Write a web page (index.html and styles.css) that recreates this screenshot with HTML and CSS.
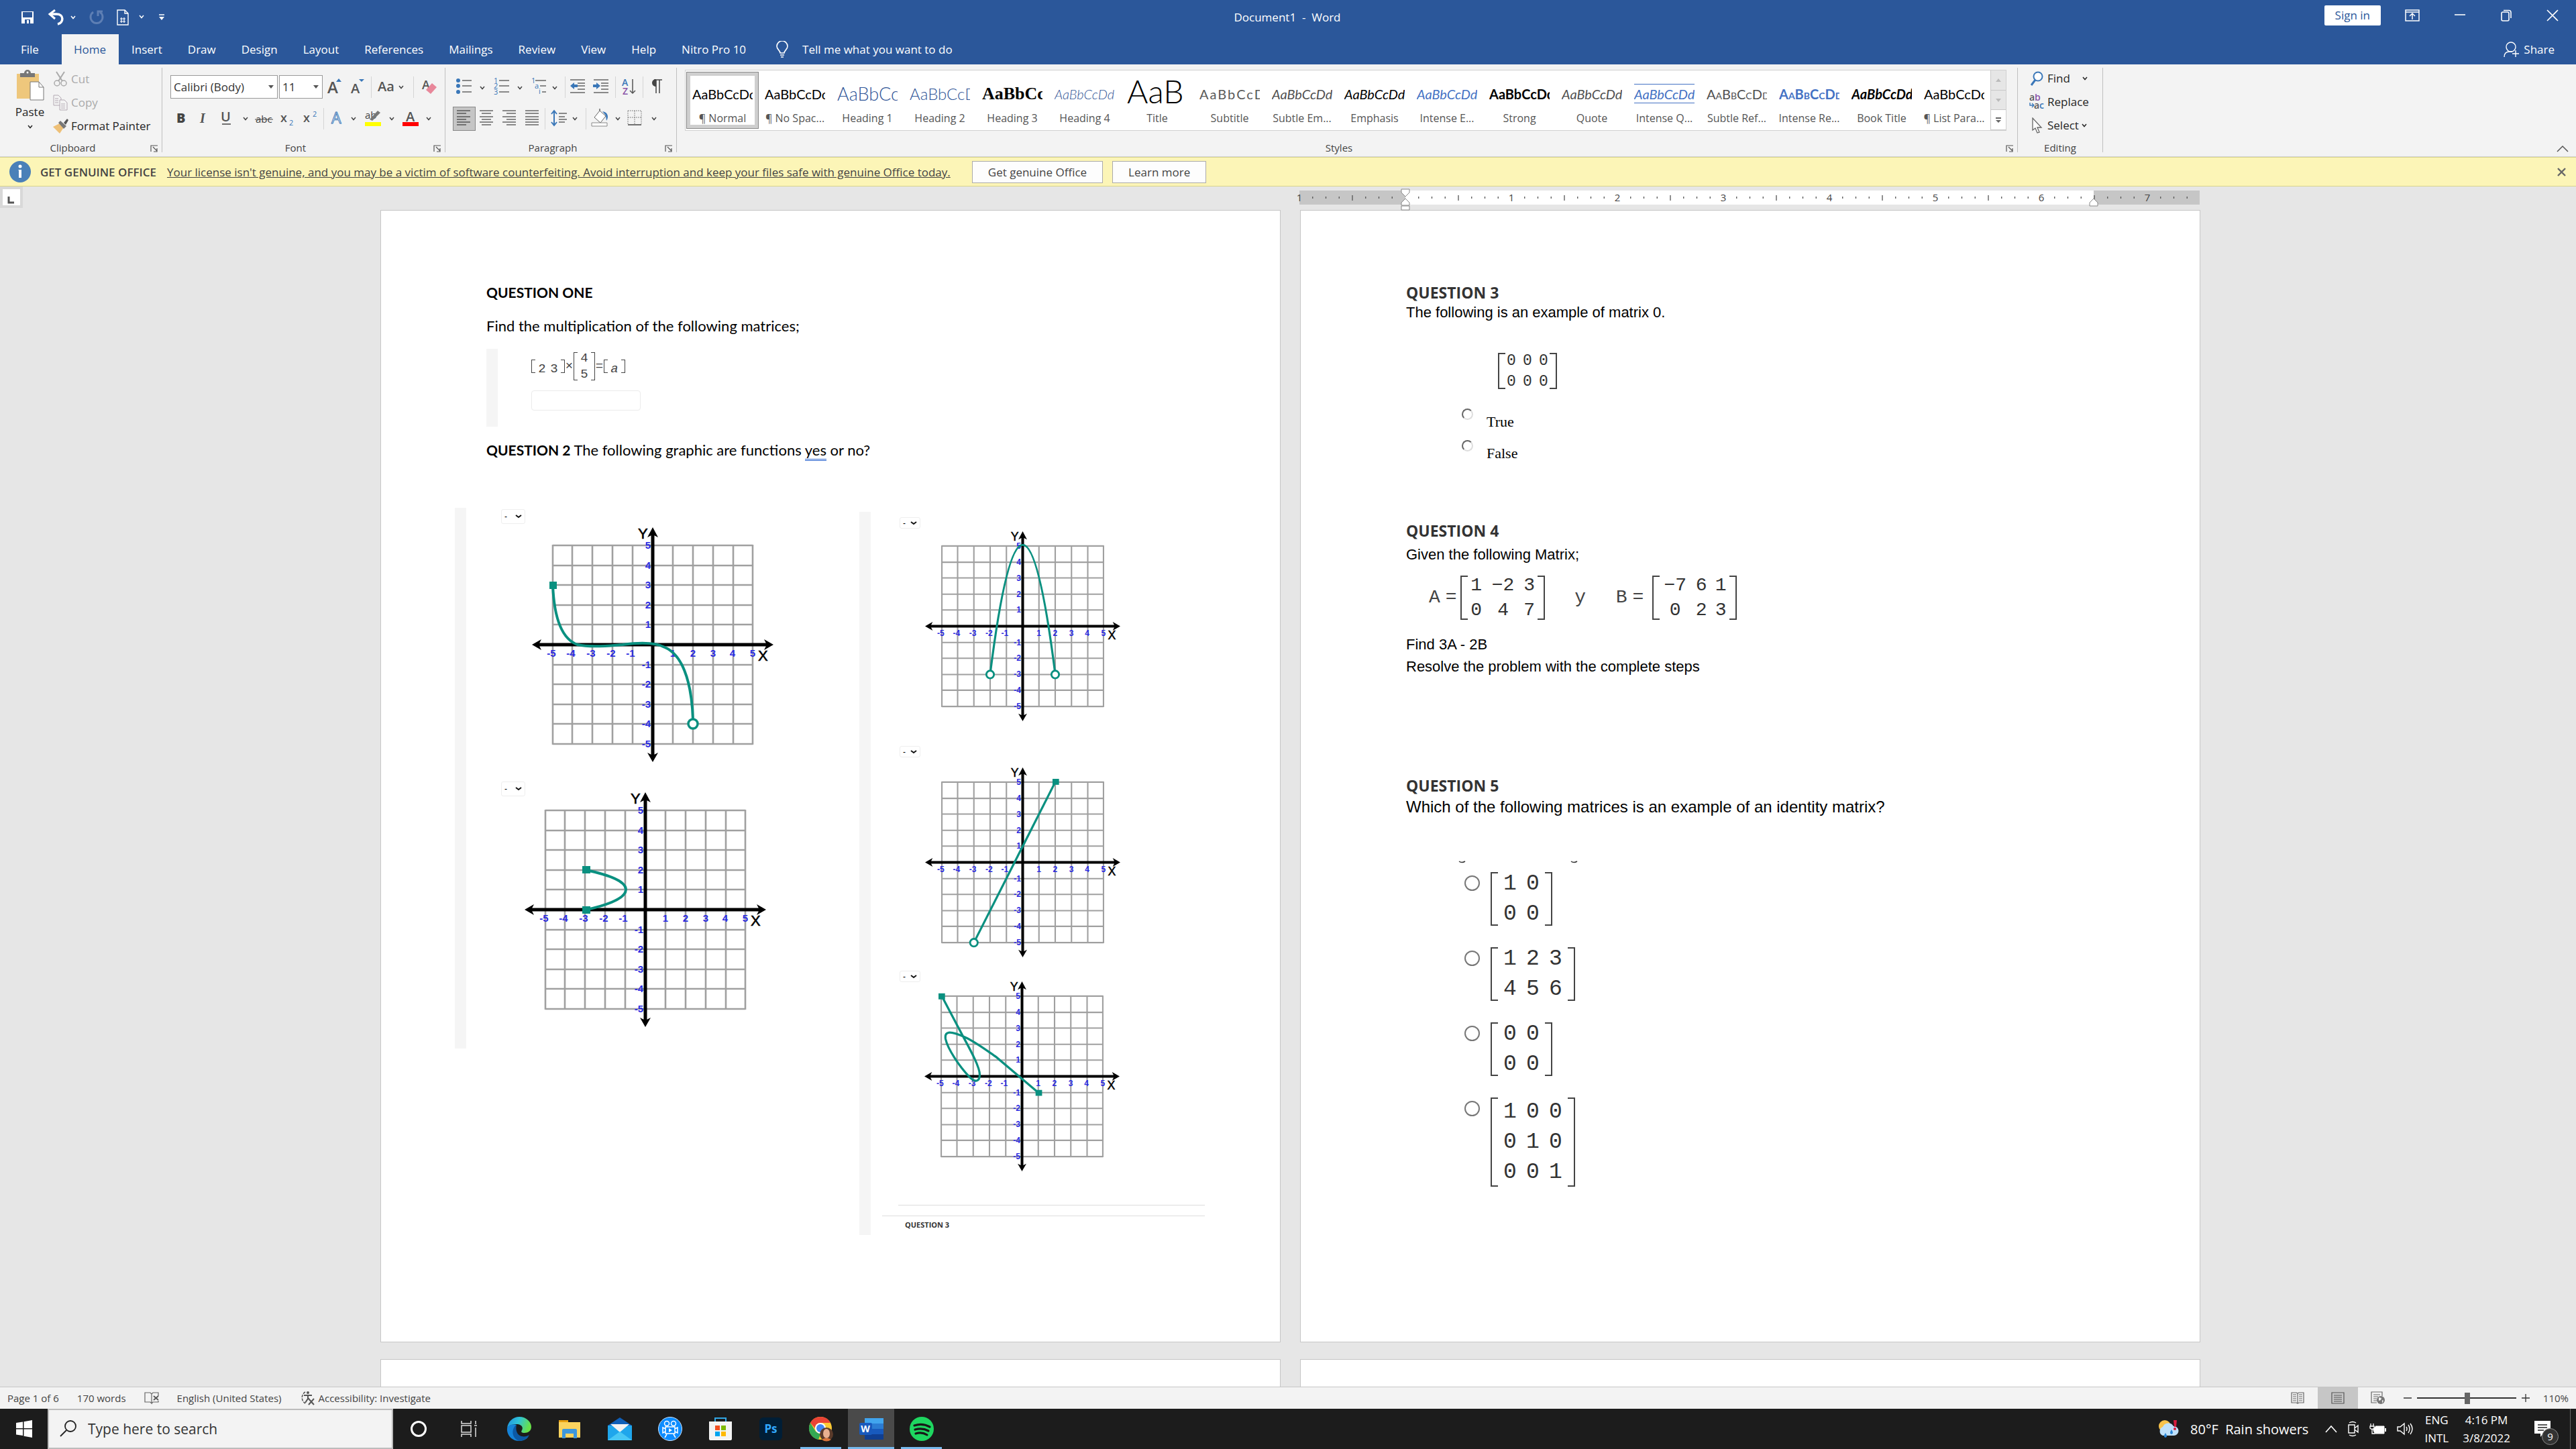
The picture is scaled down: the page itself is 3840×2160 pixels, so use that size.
FILE: index.html
```html
<!DOCTYPE html>
<html lang="en">

<head>
  <meta charset="UTF-8">
  <meta name="viewport" content="width=device-width, initial-scale=1.0">
  <title>Document1 - Word</title>
  <link rel="stylesheet" href="styles.css">
</head>

<body>
  <!-- shared shapes -->
  <svg class="defs" aria-hidden="true">
    <symbol id="chev" viewBox="0 0 8 6"><path d="M1 1l3 3.5L7 1" fill="none" stroke="currentColor" stroke-width="1.5" /></symbol>
    <symbol id="launch" viewBox="0 0 12 11"><path d="M1 10V1h10M4 3l6 6M10 5v5H5" fill="none" stroke="#555" stroke-width="1.2" /></symbol>
  </svg>

  <div class="app">
    <header class="titlebar">
      <div class="quick">
        <button aria-label="Save"><svg width="22" height="22" viewBox="0 0 22 22"><path d="M2 2h18v18H2z" fill="#fff" /><path d="M4 3h14v8H4z" fill="#2b579a" /><path d="M7 14h8v6H7z" fill="#2b579a" /><path d="M10 15h3v5h-3z" fill="#fff" /></svg></button>
        <button aria-label="Undo"><svg width="44" height="24" viewBox="0 0 44 24"><path d="M5 7h9c12 0 11 13 2 15" fill="none" stroke="#fff" stroke-width="3.500" /><path d="M12 1L4 7l8 7" fill="none" stroke="#fff" stroke-width="3" /><use href="#chev" x="35" y="9" width="8" height="6" /></svg></button>
        <button aria-label="Redo"><svg width="24" height="24" viewBox="0 0 24 24"><path d="M7 4a9 9 0 1 0 10 0" fill="none" stroke="#5e7fb4" stroke-width="3" /><path d="M14 10V3h7" fill="none" stroke="#5e7fb4" stroke-width="3" /></svg></button>
        <button aria-label="Page number"><svg width="44" height="24" viewBox="0 0 44 24"><path d="M1 1h11l5 5v17H1zM12 1v5h5" fill="none" stroke="#fff" stroke-width="1.4" /><path d="M7 12v8M11 12v8M5 14h8M5 18h8" stroke="#fff" stroke-width="1.2" /><use href="#chev" x="33" y="8" width="8" height="6" /></svg></button>
        <button aria-label="Customize"><svg width="10" height="10" viewBox="0 0 10 10"><path d="M1 1h8" stroke="#fff" stroke-width="1.5" /><path d="M1 4h8L5 9z" fill="#fff" /></svg></button>
      </div>
      <div class="title">Document1&nbsp; -&nbsp; Word</div>
      <div class="window-tools">
        <button class="signin">Sign in</button>
        <button aria-label="Ribbon display"><svg width="22" height="18" viewBox="0 0 22 18"><path d="M1 1h20v16H1zM1 4h20M11 15V7M7 10l4-4 4 4" fill="none" stroke="#fff" stroke-width="1.5" /></svg></button>
        <button aria-label="Minimize"><svg width="18" height="18" viewBox="0 0 18 18"><path d="M1 8h16" stroke="#fff" stroke-width="1.6" /></svg></button>
        <button aria-label="Restore"><svg width="18" height="18" viewBox="0 0 18 18"><rect x="2" y="4" width="11" height="13" rx="2" fill="none" stroke="#fff" stroke-width="1.6" /><path d="M5 1.500h8q3 0 3 3V13" fill="none" stroke="#fff" stroke-width="1.6" /></svg></button>
        <button aria-label="Close"><svg width="18" height="18" viewBox="0 0 18 18"><path d="M1 1l16 16M17 1L1 17" stroke="#fff" stroke-width="1.6" /></svg></button>
      </div>
    </header>

    <nav class="tabs">
      <button class="tab file">File</button>
      <button class="tab active">Home</button>
      <button class="tab">Insert</button>
      <button class="tab">Draw</button>
      <button class="tab">Design</button>
      <button class="tab">Layout</button>
      <button class="tab">References</button>
      <button class="tab">Mailings</button>
      <button class="tab">Review</button>
      <button class="tab">View</button>
      <button class="tab">Help</button>
      <button class="tab">Nitro Pro 10</button>
      <button class="tab tell"><svg width="20" height="26" viewBox="0 0 20 26"><path d="M7 18c0-4-5-5-5-10a8 8 0 0 1 16 0c0 5-5 6-5 10zM7 21h6M8 24h4" fill="none" stroke="#fff" stroke-width="1.6" /></svg>Tell me what you want to do</button>
      <button class="tab share"><svg width="24" height="24" viewBox="0 0 24 24"><circle cx="11" cy="8" r="7" fill="none" stroke="#fff" stroke-width="1.4" /><path d="M1 23c0-5 3-8 8-8h4M18 13v10M13 18h10" fill="none" stroke="#fff" stroke-width="1.4" /></svg>Share</button>
    </nav>

    <div class="ribbon">
      <section class="group clipboard">
        <div class="group-body">
          <button class="paste">
            <svg width="42" height="46" viewBox="0 0 42 46"><path d="M1 6h33v37H1z" fill="#eec77c" /><path d="M6 5h6a5 5 0 0 1 10 0h6v6H6z" fill="#777" /><circle cx="17" cy="4" r="1.500" fill="#fff" /><path d="M21 18h13l7 8v19H21z" fill="#fff" stroke="#777" /><path d="M34 18v8h7" fill="none" stroke="#777" /></svg>
            <span>Paste</span>
            <svg width="8" height="6"><use href="#chev" width="8" height="6" /></svg>
          </button>
          <div class="stack">
            <button class="off"><svg width="24" height="24" viewBox="0 0 24 24"><path d="M6 1l9 14M18 1L9 15" stroke="#aaa" stroke-width="2" /><circle cx="7" cy="18" r="4" fill="none" stroke="#aaa" stroke-width="1.5" /><circle cx="17" cy="18" r="4" fill="none" stroke="#aaa" stroke-width="1.5" /></svg>Cut</button>
            <button class="off"><svg width="24" height="24" viewBox="0 0 24 24"><path d="M2 1h7l4 4v11H2zM4 6h5M4 9h5M4 12h5" fill="#f3f3f3" stroke="#b3a9b3" /><path d="M11 8h7l4 4v11H11zM13 14h6M13 17h6M13 20h6" fill="#f3f3f3" stroke="#b3a9b3" /></svg>Copy</button>
            <button><svg width="24" height="24" viewBox="0 0 24 24"><path d="M1 13l10-5 6 6-6 9z" fill="#eec077" /><path d="M9 7l3-3 9 8-4 4z" fill="#777" /><path d="M17 7l5-6 2 2-4 7z" fill="#555" /></svg>Format Painter</button>
          </div>
        </div>
        <div class="group-name">Clipboard<svg width="12" height="11"><use href="#launch" /></svg></div>
      </section>

      <section class="group font">
        <div class="group-body rows">
          <div class="tools">
            <span class="combo wide"><select aria-label="Font"><option>Calibri (Body)</option></select><svg width="8" height="5" viewBox="0 0 8 5"><path d="M0 0h8L4 5z" fill="#555" /></svg></span>
            <span class="combo"><select aria-label="Font size"><option>11</option></select><svg width="8" height="5" viewBox="0 0 8 5"><path d="M0 0h8L4 5z" fill="#555" /></svg></span>
            <button aria-label="Grow font"><svg width="36" height="35"><text x="7" y="27" class="g24">A</text><path d="M20 10l4-5 4 5z" fill="#3a77b8" /></svg></button>
            <button aria-label="Shrink font"><svg width="34" height="35"><text x="6" y="27" class="g20">A</text><path d="M18 6h8l-4 4z" fill="#3a77b8" /></svg></button>
            <i class="sep"></i>
            <button aria-label="Change case"><svg width="58" height="35"><text x="7" y="24" class="g20">Aa</text><use href="#chev" x="38" y="15" width="8" height="6" /></svg></button>
            <i class="sep"></i>
            <button aria-label="Clear formatting"><svg width="40" height="35"><text x="10" y="21" class="g18">A</text><path d="M16 22l9-10 7 6-9 10z" fill="#e8879a" /></svg></button>
          </div>
          <div class="tools">
            <button aria-label="Bold"><svg width="33" height="34"><text x="9" y="23" class="g20 bold">B</text></svg></button>
            <button aria-label="Italic"><svg width="32" height="34"><text x="11" y="23" class="g20 serif-i">I</text></svg></button>
            <button aria-label="Underline"><svg width="56" height="34"><text x="10" y="21" class="g20">U</text><path d="M12 25h13" stroke="#444" stroke-width="1.500" /><use href="#chev" x="43" y="14" width="8" height="6" /></svg></button>
            <button aria-label="Strikethrough"><svg width="36" height="34"><text x="6" y="23" class="g16">abc</text><path d="M5 18h27" stroke="#444" /></svg></button>
            <button aria-label="Subscript"><svg width="35" height="34"><text x="7" y="22" class="g18">x</text><text x="20" y="27" class="g11">2</text></svg></button>
            <button aria-label="Superscript"><svg width="34" height="34"><text x="6" y="22" class="g18">x</text><text x="20" y="14" class="g11">2</text></svg></button>
            <i class="sep"></i>
            <button aria-label="Text effects"><svg width="52" height="34"><text x="9" y="24" class="g22 glow">A</text><use href="#chev" x="38" y="14" width="8" height="6" /></svg></button>
            <button aria-label="Highlight"><svg width="56" height="34"><text x="7" y="17" class="g16">ab</text><path d="M14 18L26 5l4 3-12 12z" fill="#777" /><path d="M7 22h24v6H7z" fill="#ff0" /><use href="#chev" x="43" y="14" width="8" height="6" /></svg></button>
            <button aria-label="Font color"><svg width="54" height="34"><text x="12" y="21" class="g20">A</text><path d="M7 22h24v6H7z" fill="#f00" /><use href="#chev" x="42" y="14" width="8" height="6" /></svg></button>
          </div>
        </div>
        <div class="group-name">Font<svg width="12" height="11"><use href="#launch" /></svg></div>
      </section>

      <section class="group paragraph">
        <div class="group-body rows">
          <div class="tools">
            <button aria-label="Bullets"><svg width="56" height="35"><g fill="#3a77b8"><circle cx="7" cy="8" r="3" /><circle cx="7" cy="16" r="3" /><circle cx="7" cy="25" r="3" /></g><path d="M13 8h14M13 16h14M13 25h14" stroke="#666" stroke-width="1.500" /><use href="#chev" x="39" y="16" width="8" height="6" /></svg></button>
            <button aria-label="Numbering"><svg width="56" height="35"><text x="4" y="12" class="g11">1</text><text x="4" y="20" class="g11">2</text><text x="4" y="29" class="g11">3</text><path d="M12 8h15M12 16h15M12 25h15" stroke="#666" stroke-width="1.500" /><use href="#chev" x="39" y="16" width="8" height="6" /></svg></button>
            <button aria-label="Multilevel list"><svg width="52" height="35"><text x="4" y="12" class="g11">1</text><text x="9" y="20" class="g11">a</text><text x="15" y="28" class="g11">i</text><path d="M10 8h16M17 16h9M20 25h6" stroke="#666" stroke-width="1.500" /><use href="#chev" x="35" y="16" width="8" height="6" /></svg></button>
            <i class="sep"></i>
            <button aria-label="Decrease indent"><svg width="35" height="35"><path d="M5 7h22M16 12h11M16 16h11M16 21h11M5 26h22" stroke="#666" stroke-width="1.500" /><path d="M5 16l6-5v3h5v4h-5v3z" fill="#3a77b8" /></svg></button>
            <button aria-label="Increase indent"><svg width="35" height="35"><path d="M5 7h22M16 12h11M16 16h11M16 21h11M5 26h22" stroke="#666" stroke-width="1.500" /><path d="M15 16l-6-5v3H4v4h5v3z" fill="#3a77b8" /></svg></button>
            <i class="sep"></i>
            <button aria-label="Sort"><svg width="36" height="35"><text x="7" y="16" class="g13 blue">A</text><text x="8" y="29" class="g13 purple">Z</text><path d="M23 6v21M19 23l4 4 4-4" fill="none" stroke="#555" stroke-width="1.500" /></svg></button>
            <i class="sep"></i>
            <button aria-label="Show marks"><svg width="36" height="35"><path d="M14 7h12M17 7v20M22 7v20" stroke="#444" stroke-width="1.500" /><path d="M17 6v11c-8 0-8-11 0-11z" fill="#444" /></svg></button>
          </div>
          <div class="tools">
            <button class="pressed" aria-label="Align left"><svg width="32" height="34"><path d="M5 5h20M5 9h14M5 14h20M5 18h14M5 22h20M5 26h14" stroke="#555" stroke-width="1.300" /></svg></button>
            <button aria-label="Center"><svg width="34" height="34"><path d="M7 5h20M10 9h14M7 14h20M10 18h14M7 22h20M10 26h14" stroke="#666" stroke-width="1.300" /></svg></button>
            <button aria-label="Align right"><svg width="34" height="34"><path d="M7 5h20M13 9h14M7 14h20M13 18h14M7 22h20M13 26h14" stroke="#666" stroke-width="1.300" /></svg></button>
            <button aria-label="Justify"><svg width="34" height="34"><path d="M7 5h20M7 9h20M7 14h20M7 18h20M7 22h20M7 26h20" stroke="#666" stroke-width="1.300" /></svg></button>
            <i class="sep"></i>
            <button aria-label="Line spacing"><svg width="56" height="34"><path d="M18 9h12M18 14h9M18 18h12M18 22h9" stroke="#666" stroke-width="1.300" /><path d="M11 6v20M7 10l4-5 4 5M7 22l4 5 4-5" fill="none" stroke="#3a77b8" stroke-width="2" /><use href="#chev" x="38" y="14" width="8" height="6" /></svg></button>
            <i class="sep"></i>
            <button aria-label="Shading"><svg width="54" height="34"><path d="M10 15l8-10 9 8-8 10z" fill="#fff" stroke="#666" /><path d="M18 5V2" stroke="#666" stroke-width="1.500" /><path d="M22 6c8 1 10 8 6 14l-1-8z" fill="#3a77b8" /><path d="M6 23h23v5H6z" fill="#fff" stroke="#888" /><use href="#chev" x="41" y="14" width="8" height="6" /></svg></button>
            <button aria-label="Borders"><svg width="50" height="34"><path d="M6 5h20v20M6 5v20M16 5v20M6 15h20" fill="none" stroke="#666" stroke-dasharray="1.500 1.500" /><path d="M6 26h20" stroke="#444" stroke-width="1.500" /><use href="#chev" x="41" y="14" width="8" height="6" /></svg></button>
          </div>
        </div>
        <div class="group-name">Paragraph<svg width="12" height="11"><use href="#launch" /></svg></div>
      </section>

      <section class="group styles">
        <div class="group-body">
          <div class="gallery">
            <button class="style selected"><span class="sample">AaBbCcDd</span><span>¶ Normal</span></button>
            <button class="style"><span class="sample">AaBbCcDd</span><span>¶ No Spac...</span></button>
            <button class="style"><span class="sample h1">AaBbCc</span><span>Heading 1</span></button>
            <button class="style"><span class="sample h2">AaBbCcD</span><span>Heading 2</span></button>
            <button class="style"><span class="sample h3">AaBbCc</span><span>Heading 3</span></button>
            <button class="style"><span class="sample h4">AaBbCcDd</span><span>Heading 4</span></button>
            <button class="style"><span class="sample ttl">AaB</span><span>Title</span></button>
            <button class="style"><span class="sample sub">AaBbCcD</span><span>Subtitle</span></button>
            <button class="style"><span class="sample it grey">AaBbCcDd</span><span>Subtle Em...</span></button>
            <button class="style"><span class="sample it">AaBbCcDd</span><span>Emphasis</span></button>
            <button class="style"><span class="sample it sky">AaBbCcDd</span><span>Intense E...</span></button>
            <button class="style"><span class="sample bd">AaBbCcDd</span><span>Strong</span></button>
            <button class="style"><span class="sample it grey">AaBbCcDd</span><span>Quote</span></button>
            <button class="style"><span class="sample it sky lined">AaBbCcDd</span><span>Intense Q...</span></button>
            <button class="style"><span class="sample sc grey">AaBbCcDd</span><span>Subtle Ref...</span></button>
            <button class="style"><span class="sample sc sky bd">AaBbCcDd</span><span>Intense Re...</span></button>
            <button class="style"><span class="sample it bd">AaBbCcDd</span><span>Book Title</span></button>
            <button class="style"><span class="sample">AaBbCcDd</span><span>¶ List Para...</span></button>
            <div class="gallery-scroll">
              <button aria-label="Up" disabled><svg width="8" height="5"><path d="M0 5h8L4 0z" fill="#bbb" /></svg></button>
              <button aria-label="Down" disabled><svg width="8" height="5"><path d="M0 0h8L4 5z" fill="#bbb" /></svg></button>
              <button aria-label="More"><svg width="8" height="8"><path d="M0 0h8v2H0zM0 4h8L4 8z" fill="#666" /></svg></button>
            </div>
          </div>
        </div>
        <div class="group-name">Styles<svg width="12" height="11"><use href="#launch" /></svg></div>
      </section>

      <section class="group editing">
        <div class="group-body">
          <div class="stack">
            <button><svg width="24" height="24" viewBox="0 0 24 24"><circle cx="14" cy="9" r="6.500" fill="#fff" stroke="#3a77b8" stroke-width="2" /><path d="M10 14l-6 8" stroke="#3a77b8" stroke-width="3" /></svg>Find<svg class="gap" width="8" height="6"><use href="#chev" width="8" height="6" /></svg></button>
            <button><svg width="24" height="24" viewBox="0 0 24 24"><text x="1" y="10" class="g13">a</text><text x="9" y="10" class="g13 purple">b</text><text x="8" y="22" class="g13">a</text><text x="16" y="22" class="g13 blue">c</text><path d="M2 13v4h5M5 14l3 3-3 3" fill="none" stroke="#3a77b8" stroke-width="1.400" /></svg>Replace</button>
            <button><svg width="24" height="24" viewBox="0 0 24 24"><path d="M6 1v18l4-3 3 7 3-1-3-7h6z" fill="#fff" stroke="#666" stroke-width="1.300" /></svg>Select<svg width="8" height="6"><use href="#chev" width="8" height="6" /></svg></button>
          </div>
        </div>
        <div class="group-name">Editing</div>
      </section>
      <button class="collapse" aria-label="Collapse ribbon"><svg width="18" height="11" viewBox="0 0 18 11"><path d="M1 10l8-8 8 8" fill="none" stroke="#555" stroke-width="1.500" /></svg></button>
    </div>

    <div class="notice">
      <svg width="32" height="32" viewBox="0 0 32 32"><circle cx="16" cy="16" r="16" fill="#4a80b8" /><circle cx="16" cy="8" r="2.500" fill="#fff" /><path d="M13 13h5v12h-4V14z" fill="#fff" /></svg>
      <strong>GET GENUINE OFFICE</strong>
      <a href="#">Your license isn't genuine, and you may be a victim of software counterfeiting. Avoid interruption and keep your files safe with genuine Office today.</a>
      <button>Get genuine Office</button>
      <button>Learn more</button>
      <button class="dismiss" aria-label="Dismiss"><svg width="13" height="13" viewBox="0 0 13 13"><path d="M1 1l11 11M12 1L1 12" stroke="#666" stroke-width="2.400" /></svg></button>
    </div>

    <main class="canvas">
      <div class="ruler-row">
        <div class="tab-stop"><svg width="26" height="24" viewBox="0 0 26 24"><path d="M9 11v9h8" fill="none" stroke="#555" stroke-width="3" /></svg></div>
        <svg class="ruler" width="1342" height="36" viewBox="0 0 1342 36">
          <defs>
            <pattern id="ticks" x="0" y="0" width="158" height="36" patternUnits="userSpaceOnUse">
              <path d="M19.750 15v3M39.500 15v3M59.250 15v3M79 13v8M98.750 15v3M118.500 15v3M138.250 15v3" stroke="#555" stroke-width="1.300" />
            </pattern>
          </defs>
          <rect y="6" width="1342" height="21" fill="#c6c6c6" />
          <rect x="158" y="6" width="1026" height="21" fill="#fff" />
          <rect width="1342" height="36" fill="url(#ticks)" />
          <g class="ruler-num" text-anchor="middle">
            <text x="0" y="22">1</text><text x="316" y="22">1</text><text x="474" y="22">2</text><text x="632" y="22">3</text><text x="790" y="22">4</text><text x="948" y="22">5</text><text x="1106" y="22">6</text><text x="1264" y="22">7</text>
          </g>
          <g fill="#fff" stroke="#888"><path d="M152 4h12v5l-6 6-6-6zM158 18l6 6v4h-12v-4zM152 29h12v6h-12zM1184 18l6 6v5h-12v-5z" /></g>
        </svg>
      </div>

      <div class="pages">
        <article class="page">
          <p class="calibri"><b>QUESTION ONE</b></p>
          <p class="calibri second">Find the multiplication of the following matrices;</p>
          <div class="clip">
            <div class="equation small">
              <div class="matrix c2"><span>2</span><span>3</span></div><span class="op">×</span>
              <div class="matrix c1 tall"><span>4</span><span>5</span></div><span class="op">=</span>
              <div class="matrix c1 unk"><span><i>a</i></span></div>
            </div>
            <input class="answer" type="text" aria-label="Answer">
          </div>
          <p class="calibri"><b>QUESTION 2</b> The following graphic are functions <span class="grammar">yes</span> or no?</p>

          <div class="graphs">
            <div class="graph-col">
              <figure class="plot">
                <span class="pick"><select aria-label="Graph 1"><option>-</option></select><svg width="10" height="6" viewBox="0 0 10 6"><path d="M1 1l4 3 4-3" /></svg></span>
                <svg width="360" height="350" viewBox="-180 -175 360 350">
                  <!-- grid, axes and numbers, reused by the other graphs -->
                  <g id="axes">
                    <path d="M-149-148h298M-149-118h298M-149-89h298M-149-59h298M-149-30h298M-149 30h298M-149 59h298M-149 89h298M-149 118h298M-149 148h298M-149-149v298M-120-149v298M-90-149v298M-60-149v298M-30-149v298M30-149v298M60-149v298M90-149v298M120-149v298M149-149v298" fill="none" stroke="#a0a0a0" stroke-width="2.6" />
                    <path d="M-172 0H172M0-166V166" stroke="#000" stroke-width="5" />
                    <path d="M-180 0l14-8-4 8 4 8zM180 0l-14-8 4 8-4 8zM0-175l-8 15 8-4 8 4zM0 175l-8-14 8 4 8-4z" />
                    <g class="axis-num" text-anchor="end">
                      <text x="-3" y="-143">5</text><text x="-3" y="-113">4</text><text x="-3" y="-84">3</text><text x="-3" y="-54">2</text><text x="-3" y="-25">1</text>
                      <text x="-3" y="35">-1</text><text x="-3" y="64">-2</text><text x="-3" y="94">-3</text><text x="-3" y="123">-4</text><text x="-3" y="153">-5</text>
                    </g>
                    <g class="axis-num" text-anchor="middle">
                      <text x="-151" y="18">-5</text><text x="-122" y="18">-4</text><text x="-92" y="18">-3</text><text x="-62" y="18">-2</text><text x="-33" y="18">-1</text>
                      <text x="30" y="18">1</text><text x="60" y="18">2</text><text x="90" y="18">3</text><text x="119" y="18">4</text><text x="149" y="18">5</text>
                    </g>
                    <text class="axis-name" x="-22" y="-158">Y</text>
                    <text class="axis-name" x="157" y="24">X</text>
                  </g>
                  <path class="curve" d="M-149-89C-147-40-135-8-112 0C-90 5-60 1-45 0C-15-4 5-3 18 4C42 14 58 50 60 112" />
                  <path class="dot" d="M-154-94h11v11h-11z" />
                  <circle class="hole" cx="60" cy="118" r="7" />
                </svg>
              </figure>
              <figure class="plot lower">
                <span class="pick"><select aria-label="Graph 2"><option>-</option></select><svg width="10" height="6" viewBox="0 0 10 6"><path d="M1 1l4 3 4-3" /></svg></span>
                <svg width="360" height="350" viewBox="-180 -175 360 350">
                  <use href="#axes" />
                  <path class="curve" d="M-88-59C-65-54-29-45-29-30S-65-5-88 0" />
                  <path class="dot" d="M-94-65h12v11h-12zM-94-5h12v11h-12z" />
                </svg>
              </figure>
            </div>

            <div class="graph-col right">
              <figure class="plot">
                <span class="pick"><select aria-label="Graph 3"><option>-</option></select><svg width="10" height="6" viewBox="0 0 10 6"><path d="M1 1l4 3 4-3" /></svg></span>
                <svg width="291" height="283" viewBox="-180 -175 360 350">
                  <use href="#axes" />
                  <path class="curve" d="M-60 88Q0-388 60 88" />
                  <circle class="hole" cx="-60" cy="89" r="7" />
                  <circle class="hole" cx="60" cy="89" r="7" />
                </svg>
              </figure>
              <figure class="plot second-plot">
                <span class="pick"><select aria-label="Graph 4"><option>-</option></select><svg width="10" height="6" viewBox="0 0 10 6"><path d="M1 1l4 3 4-3" /></svg></span>
                <svg width="291" height="283" viewBox="-180 -175 360 350">
                  <use href="#axes" />
                  <path class="curve" d="M-90 148L60-148" />
                  <path class="dot" d="M55-154h12v11H55z" />
                  <circle class="hole" cx="-90" cy="148" r="7" />
                </svg>
              </figure>
              <figure class="plot third-plot">
                <span class="pick"><select aria-label="Graph 5"><option>-</option></select><svg width="10" height="6" viewBox="0 0 10 6"><path d="M1 1l4 3 4-3" /></svg></span>
                <svg width="291" height="283" viewBox="-180 -175 360 350">
                  <use href="#axes" />
                  <path class="curve" d="M-148-148L-110-76C-96-50-78-18-78-3C-78 10-86 12-97 1C-115-18-137-50-141-69C-143-82-136-86-105-72C-85-63-60-44-48-36L30 30" />
                  <path class="dot" d="M-154-153h12v11h-12zM25 25h12v11H25z" />
                </svg>
              </figure>
              <hr><hr class="wide">
              <p class="tiny">QUESTION 3</p>
            </div>
          </div>
        </article>

        <article class="page">
          <h2>QUESTION 3</h2>
          <p>The following is an example of matrix 0.</p>
          <div class="matrix c3 zero"><span>0</span><span>0</span><span>0</span><span>0</span><span>0</span><span>0</span></div>
          <div class="choices">
            <label><input type="radio" name="q3"><span>True</span></label>
            <label><input type="radio" name="q3"><span>False</span></label>
          </div>

          <h2 class="q4">QUESTION 4</h2>
          <p class="given">Given the following Matrix;</p>
          <div class="equation medium">
            <span>A</span><span class="op">=</span>
            <div class="matrix c3 ma"><span>1</span><span>−2</span><span>3</span><span>0</span><span>4</span><span>7</span></div>
            <span class="and">y</span>
            <span>B</span><span class="op">=</span>
            <div class="matrix c3 mb"><span>−7</span><span>6</span><span>1</span><span>0</span><span>2</span><span>3</span></div>
          </div>
          <p>Find 3A - 2B</p>
          <p class="resolve">Resolve the problem with the complete steps</p>

          <h2 class="q5">QUESTION 5</h2>
          <p class="which">Which of the following matrices is an example of an identity matrix?</p>
          <svg class="scraps" width="180" height="4" viewBox="0 0 180 4"><path d="M1 1q4 3 9 0M168 1q4 3 9 0" fill="none" stroke="#333" stroke-width="1.500" /></svg>
          <div class="options">
            <label><input type="radio" name="q5"><span class="matrix c2"><span>1</span><span>0</span><span>0</span><span>0</span></span></label>
            <label><input type="radio" name="q5"><span class="matrix c3"><span>1</span><span>2</span><span>3</span><span>4</span><span>5</span><span>6</span></span></label>
            <label><input type="radio" name="q5"><span class="matrix c2"><span>0</span><span>0</span><span>0</span><span>0</span></span></label>
            <label><input type="radio" name="q5"><span class="matrix c3"><span>1</span><span>0</span><span>0</span><span>0</span><span>1</span><span>0</span><span>0</span><span>0</span><span>1</span></span></label>
          </div>
        </article>
        <article class="page"></article>
        <article class="page"></article>
      </div>
    </main>

    <footer class="status">
      <span>Page 1 of 6</span>
      <span>170 words</span>
      <svg width="22" height="20" viewBox="0 0 22 20"><path d="M1 2h8l2 2v14l-2-2H1zM11 4l2-2h8v5M21 14v2h-8l-2 2" fill="none" stroke="#666" stroke-width="1.200" /><path d="M14 7l7 6M21 7l-7 6" stroke="#555" stroke-width="1.800" /></svg>
      <span>English (United States)</span>
      <span class="access"><svg width="24" height="22" viewBox="0 0 24 22"><path d="M8 2a10 10 0 0 0 0 17" fill="none" stroke="#555" stroke-width="1.500" stroke-dasharray="4 1.500" /><circle cx="12" cy="3" r="2" fill="#555" /><path d="M6 7h12M12 7v5l-4 6M12 11l2 2M13 12l8 9M21 12l-8 9" fill="none" stroke="#555" stroke-width="2" /></svg>Accessibility: Investigate</span>
      <div class="views">
        <button aria-label="Read mode"><svg width="20" height="18" viewBox="0 0 20 18"><path d="M1 1h7l2 1 2-1h7v15h-7l-2 1-2-1H1zM10 2v15M3 4h5M3 7h5M3 10h5M3 13h5M12 4h5M12 7h5M12 10h5M12 13h5" fill="none" stroke="#666" stroke-width="1.200" /></svg></button>
        <button class="current" aria-label="Print layout"><svg width="20" height="18" viewBox="0 0 20 18"><path d="M1 1h18v16H1zM4 5h12M4 8h12M4 11h12M4 14h12" fill="none" stroke="#555" stroke-width="1.200" /></svg></button>
        <button aria-label="Web layout"><svg width="22" height="20" viewBox="0 0 22 20"><path d="M9 17H1V1h16v6M4 5h10M4 8h7M4 11h5M4 14h5" fill="none" stroke="#666" stroke-width="1.200" /><circle cx="15" cy="13" r="6" fill="#777" /><path d="M12 9l4 1-1 3-3 1zM17 13l2 1-2 4z" fill="#f3f3f3" /></svg></button>
      </div>
      <div class="zoom-box">
        <button aria-label="Zoom out"><svg width="12" height="12"><path d="M0 6h12" stroke="#333" stroke-width="1.500" /></svg></button>
        <input class="zoom" type="range" min="0" max="100" value="51" aria-label="Zoom">
        <button aria-label="Zoom in"><svg width="12" height="12"><path d="M0 6h12M6 0v12" stroke="#333" stroke-width="1.300" /></svg></button>
      </div>
      <span class="percent">110%</span>
    </footer>

    <div class="taskbar">
      <button class="start" aria-label="Start"><svg width="26" height="26" viewBox="0 0 26 26"><path d="M1 4l10-1.500V12H1zM12.500 2.300L25 0v12H12.500zM1 13.500h10V23L1 21.500zM12.500 13.500H25V26l-12.500-2.300z" fill="#fff" /></svg></button>
      <label class="search"><svg width="26" height="26" viewBox="0 0 26 26"><circle cx="16" cy="9" r="8" fill="none" stroke="#222" stroke-width="1.800" /><path d="M10 15L1 24" stroke="#222" stroke-width="1.800" /></svg><input type="text" placeholder="Type here to search" aria-label="Search"></label>
      <div class="apps">
        <button aria-label="Cortana"><svg width="26" height="26" viewBox="0 0 26 26"><circle cx="13" cy="13" r="10.500" fill="none" stroke="#fff" stroke-width="3" /></svg></button>
        <button aria-label="Task view"><svg width="26" height="26" viewBox="0 0 26 26"><path d="M2 1v4h14V1M2 25v-4h14v4M2 8h14v10H2zM23 1v5M23 11v14M21 8h4" fill="none" stroke="#ddd" stroke-width="1.500" /></svg></button>
        <button aria-label="Edge"><svg width="38" height="38" viewBox="0 0 38 38"><defs><linearGradient id="eg" x1="0" y1="0" x2="1" y2="0.300"><stop offset="0" stop-color="#1f8fe0" /><stop offset="0.500" stop-color="#2fc3d8" /><stop offset="1" stop-color="#67e04a" /></linearGradient></defs><path d="M1 18C2 8 10 1 19 1c11 0 18 8 18 15 0 6-5 9-10 9-4 0-6-1-4-4 3-6-3-9-8-9C8 12 3 14 1 18z" fill="url(#eg)" /><path d="M1 18c2-5 9-7 14-5-5 3-6 13 1 18 5 4 12 3 17-1-4 6-10 7-14 7C8 37 0 28 1 18z" fill="#1583d8" /><path d="M15 13c-8 5-8 20 4 24 6 0 12-3 15-9-6 4-15 3-18-3-2-4-2-8-1-12z" fill="#0c59a4" /></svg></button>
        <button aria-label="File Explorer"><svg width="34" height="28" viewBox="0 0 34 28"><path d="M1 1h14v6H1z" fill="#e8a010" /><path d="M1 4h32v23H1z" fill="#fbd35e" /><path d="M6 28V16q0-2 2-2h18q2 0 2 2v12h-5v-7H11v7z" fill="#3d97dc" /></svg></button>
        <button aria-label="Mail"><svg width="38" height="34" viewBox="0 0 38 34"><path d="M1 12L19 0l18 12v8H1z" fill="#0f5fb8" /><path d="M1 12h36v22H1z" fill="#1fa6ec" /><path d="M5 10h28L19 22z" fill="#f2f2f2" /><path d="M1 34l18-13 18 13z" fill="#49c8f5" /></svg></button>
        <button aria-label="Video editor"><svg width="38" height="38" viewBox="0 0 38 38"><circle cx="19" cy="19" r="17.500" fill="#0c8cff" stroke="#cfe6ff" stroke-width="1" /><circle cx="14" cy="11" r="3.500" fill="none" stroke="#fff" stroke-width="1.500" /><circle cx="24" cy="11" r="3.500" fill="none" stroke="#fff" stroke-width="1.500" /><path d="M12 16h14v10H12zM26 19l4-2v8l-4-2zM14 27l-3 5M24 27l3 5M8 17l4 2v4l-4 2z" fill="none" stroke="#fff" stroke-width="1.500" /><path d="M17 18l5 3-5 3z" fill="#fff" /></svg></button>
        <button aria-label="Store"><svg width="36" height="36" viewBox="0 0 36 36"><path d="M10 8V2h16v6" fill="none" stroke="#32a8e6" stroke-width="2" /><path d="M1 7h34v26q0 2-3 2H4q-3 0-3-2z" fill="#f4f4f4" /><path d="M10 13h7v7h-7z" fill="#f25022" /><path d="M19 13h7v7h-7z" fill="#7fba00" /><path d="M10 22h7v7h-7z" fill="#00a4ef" /><path d="M19 22h7v7h-7z" fill="#ffb900" /></svg></button>
        <button aria-label="Photoshop"><svg width="34" height="34" viewBox="0 0 34 34"><rect width="34" height="34" rx="6" fill="#001e36" /><text x="17" y="23" text-anchor="middle" class="ps">Ps</text></svg></button>
        <button class="open" aria-label="Chrome"><svg width="38" height="38" viewBox="0 0 38 38"><circle cx="18" cy="18" r="17" fill="#fcc934" /><path d="M3 10a17 17 0 0 1 30 0H18a8 8 0 0 0-8 8z" fill="#ea4335" /><path d="M3 10l8 13 7 4-3 8A17 17 0 0 1 3 10z" fill="#34a853" /><circle cx="18" cy="18" r="8" fill="#fff" /><circle cx="18" cy="18" r="6" fill="#4285f4" /><circle cx="27" cy="27" r="10" fill="#5a3a2a" /><ellipse cx="27" cy="26" rx="5" ry="7" fill="#e8b090" /><path d="M20 35q7-5 14 0-7 5-14 0z" fill="#d9743c" /></svg></button>
        <button class="open focused" aria-label="Word"><svg width="38" height="34" viewBox="0 0 38 34"><path d="M9 1h28v9H9z" fill="#41a5ee" /><path d="M9 9h28v9H9z" fill="#2b7cd3" /><path d="M9 17h28v8H9z" fill="#185abd" /><path d="M9 25h28v8H9z" fill="#103f91" /><rect x="1" y="8" width="19" height="18" rx="2" fill="#185abd" /><text x="10" y="22" text-anchor="middle" class="wd">W</text></svg></button>
        <button class="open" aria-label="Spotify"><svg width="38" height="38" viewBox="0 0 38 38"><circle cx="19" cy="19" r="18" fill="#1ed760" /><path d="M8 14q12-4 23 2M9 20q11-3 20 2M10 26q9-3 17 2" fill="none" stroke="#181818" stroke-width="3.200" stroke-linecap="round" /></svg></button>
      </div>
      <div class="tray">
        <svg width="34" height="28" viewBox="0 0 34 28"><circle cx="11" cy="10" r="9" fill="#f8c24a" /><path d="M8 24a7 7 0 0 1 0-13 9 9 0 0 1 16-1 7 7 0 0 1 1 14z" fill="#bfe0fa" /><path d="M12 20q-4 6 0 7 4-1 0-7zM21 15q-4 6 0 7 4-1 0-7z" fill="#2a86d8" /><path d="M24 1h5l-1 10h-3z" fill="#d81b3c" /><circle cx="26" cy="14" r="2" fill="#d81b3c" /></svg>
        <span class="weather">80°F&nbsp; Rain showers</span>
        <svg width="18" height="12" viewBox="0 0 18 12"><path d="M1 11l8-9 8 9" fill="none" stroke="#fff" stroke-width="1.600" /></svg>
        <svg width="18" height="24" viewBox="0 0 18 24"><path d="M2 6h9v12H2zM11 11l5-4v10l-5-4M3 3q5-3 10 0M3 21q5 3 10 0" fill="none" stroke="#fff" stroke-width="1.400" /></svg>
        <svg width="26" height="18" viewBox="0 0 26 18"><path d="M9 5h13v11H6V9" fill="#fff" stroke="#fff" /><path d="M24 8v5" stroke="#fff" stroke-width="2" /><path d="M2 1v4M6 1v4M1 5h6v3q-3 3-6 0zM4 9v7h4" fill="#1c1c1c" stroke="#fff" stroke-width="1.300" /></svg>
        <svg width="26" height="20" viewBox="0 0 26 20"><path d="M1 7h4l6-5v16l-6-5H1zM14 7q2 3 0 6M17 4q4 6 0 12M20 2q6 8 0 16" fill="none" stroke="#fff" stroke-width="1.400" /></svg>
        <div class="two-line"><span>ENG</span><span>INTL</span></div>
        <div class="two-line clock"><span>4:16 PM</span><span>3/8/2022</span></div>
        <button class="alerts" aria-label="Notifications"><svg width="24" height="24" viewBox="0 0 24 24"><path d="M0 0h24v19H13l-4 5v-5H0z" fill="#fff" /><path d="M5 6h14M5 10h14M5 14h9" stroke="#222" stroke-width="1.400" /></svg><span class="badge">9</span></button>
      </div>
    </div>
  </div>
</body>

</html>
```

FILE: styles.css
```css
* {
  box-sizing: border-box;
}

body {
  margin: 0;
  font-family: "Open Sans", "Noto Sans", sans-serif;
  font-size: 17px;
  color: #262626;
}

button {
  display: flex;
  align-items: center;
  margin: 0;
  padding: 0;
  border: 0;
  background: none;
  color: inherit;
  font: inherit;
  white-space: nowrap;
}

p, h2, figure {
  margin: 0;
}

.defs {
  position: absolute;
  width: 0;
  height: 0;
}

.app {
  display: flex;
  flex-direction: column;
  height: 100vh;
  overflow: hidden;
}

/* title bar */
.titlebar {
  display: grid;
  grid-template-columns: 1fr auto 1fr;
  align-items: center;
  height: 51px;
  background: #2b579a;
  color: #fff;
}

.quick {
  display: flex;
  align-items: center;
  gap: 18px;
  padding-left: 30px;
}

.title {
  padding-right: 2px;
}

.window-tools {
  display: flex;
  align-items: center;
  justify-content: flex-end;
  gap: 51px;
  padding: 0 26px 6px 0;
}

.signin {
  height: 30px;
  margin-right: -15px;
  padding: 0 16px;
  border-radius: 2px;
  background: #fff;
  color: #2b579a;
}

/* tabs */
.tabs {
  display: flex;
  height: 45px;
  background: #2b579a;
  color: #fff;
}

.tab {
  padding: 0 19px;
}

.tab.file {
  padding: 0 34px 0 31px;
}

.tab.active {
  padding: 0 19px 0 18px;
  background: #f3f3f3;
  color: #2b579a;
}

.tab.tell {
  gap: 20px;
  padding-left: 25px;
}

.tab.share {
  gap: 6px;
  margin-left: auto;
  padding-right: 32px;
}

/* ribbon */
.ribbon {
  display: flex;
  height: 138px;
  padding: 5px 0 6px;
  border-bottom: 1px solid #d2d2d2;
  background: #f3f3f3;
}

.group {
  display: flex;
  flex-direction: column;
  border-right: 1px solid #c0c0c0;
}

.group-body {
  display: flex;
  flex: 1;
}

.group-name {
  position: relative;
  height: 22px;
  line-height: 30px;
  font-size: 15px;
  text-align: center;
  color: #444;
  padding-right: 24px;
}

.group-name svg {
  position: absolute;
  right: 5px;
  bottom: 0;
}

.clipboard {
  width: 242px;
}

.font {
  width: 422px;
}

.paragraph {
  width: 345px;
}

.styles {
  flex: 0 1 1999px;
  min-width: 0;
}

.editing {
  width: 127px;
}

.editing .group-name {
  padding: 0;
}

.paste {
  flex-direction: column;
  gap: 4px;
  width: 51px;
  margin-left: 19px;
  padding-top: 3px;
}

.paste span {
  line-height: 26px;
}

.paste svg:last-child {
  margin-top: 2px;
}

.stack {
  display: flex;
  flex-direction: column;
  gap: 10px;
  padding: 4px 0 0 8px;
}

.stack button {
  gap: 4px;
  height: 25px;
  line-height: 25px;
}

.stack .gap {
  margin-left: 14px;
}

.stack .off {
  color: #aaa;
}

.editing .stack {
  padding: 3px 0 0 16px;
}

.rows {
  flex-direction: column;
  gap: 12px;
  padding: 11px 0 0 12px;
}

.tools {
  display: flex;
  align-items: center;
  height: 35px;
  color: #444;
}

.tools svg {
  display: block;
}

.sep {
  width: 1px;
  height: 32px;
  margin: 0 2px;
  background: #d5d5d5;
}

.pressed {
  outline: 1px solid #888;
  background: #c5c5c5;
}

.combo {
  position: relative;
  width: 65px;
}

.combo.wide {
  width: 160px;
  margin-right: 2px;
}

.combo select {
  display: block;
  width: 100%;
  height: 35px;
  padding: 0 4px;
  border: 1px solid #999;
  border-radius: 0;
  background: #fff;
  color: #333;
  font: inherit;
  appearance: none;
}

.combo svg {
  position: absolute;
  right: 6px;
  top: 15px;
}

.g11 { font-size: 11px; fill: #3a77b8; }
.g13 { font-size: 14px; font-weight: 600; fill: #555; }
.g16 { font-size: 15px; fill: #444; }
.g18 { font-size: 18px; font-weight: 600; fill: #555; }
.g20 { font-size: 20px; font-weight: 600; fill: #555; }
.g22 { font-size: 23px; }
.g24 { font-size: 24px; font-weight: 600; fill: #555; }
.bold { font-weight: 800; fill: #444; }
.blue { fill: #3a77b8; }
.purple { fill: #8a55a8; }
.glow { fill: #fff; stroke: #3a77b8; }

.serif-i {
  font-family: "Liberation Serif", serif;
  font-style: italic;
}

.gallery {
  display: flex;
  height: 91px;
  margin: 3px 0 0 12px;
  border: 1px solid #d0d0d0;
  background: #fff;
}

.style {
  display: block;
  width: 108px;
  height: 85px;
  margin-top: 2px;
  padding: 0 7px;
  border: 1px solid transparent;
  font-size: 16px;
  color: #555;
  text-align: center;
}

.styles .style:first-child {
  margin-left: 1px;
}

.style span {
  display: block;
  overflow: hidden;
  line-height: 24px;
  margin: 0 -4px;
}

.style .sample {
  height: 50px;
  margin: 2px 1px 0;
  line-height: 52px;
  font-family: Lato, sans-serif;
  font-size: 20px;
  color: #000;
  text-align: left;
}

.style.selected {
  border-color: #888;
  outline: 5px solid #cfcfcf;
  outline-offset: -6px;
}

.style .h1 { font-size: 27px; font-weight: 300; color: #2f5496; }
.style .h2 { font-size: 24px; font-weight: 300; color: #2f5496; }
.style .h3 { font-family: "Liberation Serif", serif; font-size: 26px; font-weight: 700; }
.style .h4 { font-style: italic; font-weight: 300; color: #2f5496; }
.style .ttl { font-size: 48px; font-weight: 300; line-height: 44px; }
.style .sub { letter-spacing: 2px; color: #5a5a5a; }
.style .it { font-style: italic; }
.style .grey { color: #505050; }
.style .sky { color: #4472c4; }
.style .bd { font-weight: 700; }
.style .sc { font-variant: small-caps; }

.style .lined {
  height: 29px;
  margin: 13px 1px 10px;
  border-top: 1px solid #4472c4;
  border-bottom: 1px solid #4472c4;
  line-height: 28px;
}

.gallery-scroll {
  display: flex;
  flex-direction: column;
  width: 23px;
  margin-left: auto;
}

.gallery-scroll button {
  flex: 1;
  justify-content: center;
  border-left: 1px solid #c8c8c8;
  border-bottom: 1px solid #c8c8c8;
}

.gallery-scroll button:disabled {
  background: #e6e6e6;
}

.collapse {
  align-self: flex-end;
  margin: 0 11px 0 auto;
}

/* licence bar */
.notice {
  display: flex;
  align-items: center;
  height: 44px;
  padding: 0 15px 0 14px;
  border: solid #d9d58b;
  border-width: 1px 0;
  background: #fcf5b7;
  color: #444;
}

.notice strong {
  margin: 0 16px 0 14px;
  font-weight: 600;
}

.notice a {
  margin-right: 32px;
  color: #444;
}

.notice button {
  height: 33px;
  margin-right: 14px;
  padding: 0 23px;
  border: 1px solid #ababab;
  background: #fdfdfd;
}

.notice .dismiss {
  height: auto;
  margin: 0 0 0 auto;
  padding: 0;
  border: 0;
  background: none;
}

/* document area */
.canvas {
  flex: 1;
  min-height: 0;
  overflow: hidden;
  background: #e6e6e6;
}

.ruler-row {
  display: flex;
  justify-content: center;
  position: relative;
  height: 35px;
  padding-left: 1376px;
}

.tab-stop {
  position: absolute;
  left: 0;
  top: 0;
  padding: 4px;
  background: #d8d8d8;
}

.tab-stop svg {
  display: block;
  background: #fff;
}

.ruler {
  overflow: visible;
}

.ruler-num {
  font-size: 15px;
  fill: #444;
}

.pages {
  display: grid;
  grid-template-columns: 1342px 1342px;
  gap: 25px 29px;
  justify-content: center;
  padding-left: 7px;
}

.page {
  min-height: 1688px;
  padding: 108px 157px 0;
  border: 1px solid #c6c6c6;
  background: #fff;
  color: #000;
  font: 22px/28px "Liberation Sans", Arial, sans-serif;
}

.calibri {
  font-family: Lato, sans-serif;
}

.calibri b {
  font-size: 21px;
}

.second {
  margin: 22px 0 20px;
}

.clip {
  height: 116px;
  margin-bottom: 21px;
  padding: 5px 0 0 50px;
  border-left: 17px solid #f5f5f5;
}

.grammar {
  border-bottom: 3px double #2b66d0;
}

/* matrices */
.matrix {
  position: relative;
  display: grid;
  width: max-content;
  justify-items: center;
  align-items: center;
  color: #333;
  font-family: "Liberation Mono", monospace;
}

.matrix::before,
.matrix::after {
  content: "";
  position: absolute;
  top: 0;
  bottom: 0;
  width: 9px;
  border: 2px solid #444;
}

.matrix::before {
  left: 0;
  border-right: 0;
}

.matrix::after {
  right: 0;
  border-left: 0;
}

.equation {
  display: flex;
  align-items: center;
  color: #444;
  font-family: "Liberation Mono", monospace;
}

.small {
  height: 42px;
  font-size: 19px;
}

.small .matrix {
  height: 20px;
  color: #444;
}

.small .matrix::before,
.small .matrix::after {
  width: 5px;
  border-width: 1px;
}

.small .matrix::before {
  border-right: 0;
}

.small .matrix::after {
  border-left: 0;
}

.small .c2 {
  grid-template-columns: 18px 18px;
  padding: 0 7px;
}

.small .matrix.tall {
  grid-auto-rows: 24px;
  height: 42px;
  width: 32px;
  align-content: center;
}

.small .unk {
  width: 32px;
}

.small .c1 {
  justify-content: center;
}

.small .op {
  width: 13px;
  text-align: center;
}

.answer {
  display: block;
  width: 163px;
  height: 30px;
  margin-top: 15px;
  border: 1px solid #ebebeb;
  border-radius: 4px;
  background: #fff;
}

.zero {
  grid-template-columns: repeat(3, 24px);
  grid-auto-rows: 31px;
  align-content: center;
  height: 54px;
  margin: 46px 0 29px 137px;
  padding: 0 8px;
  font-size: 23px;
}

.medium {
  height: 66px;
  margin: 17px 0 23px 34px;
  font-size: 28px;
}

.medium .matrix {
  grid-auto-rows: 37px;
  align-content: center;
  height: 66px;
}

.medium .op {
  margin: 0 5px 0 8px;
}

.ma {
  grid-template-columns: 28px 52px 26px;
  padding: 0 10px;
}

.mb {
  grid-template-columns: 48px 30px 28px;
  margin-left: 8px;
  padding: 0 10px;
}

.and {
  width: 106px;
  text-align: center;
}

/* answers */
.choices {
  display: flex;
  flex-direction: column;
  gap: 13px;
  padding-left: 83px;
  font-family: "Liberation Serif", serif;
}

.choices label {
  display: flex;
  gap: 20px;
}

.choices span {
  margin-top: 6px;
}

input[type="radio"] {
  width: 17px;
  height: 17px;
  margin: 0;
  border: 2px solid;
  border-color: #666 #ddd #ddd #666;
  border-radius: 50%;
  background: #fff;
  appearance: none;
}

.options {
  display: flex;
  flex-direction: column;
  gap: 32px;
  padding-left: 87px;
}

.options label {
  display: flex;
  gap: 16px;
}

.options input[type="radio"] {
  width: 23px;
  height: 23px;
  margin-top: 5px;
  border-color: #777;
}

.options .matrix {
  grid-auto-rows: 45px;
  align-content: center;
  height: 80px;
  padding: 0 12px;
  font-size: 33px;
}

.options .c2 {
  grid-template-columns: repeat(2, 34px);
}

.options .c3 {
  grid-template-columns: repeat(3, 34px);
}

.options label:last-child .matrix {
  height: 133px;
}

h2 {
  color: #333;
  font: 700 23px/28px "Open Sans", sans-serif;
}

h2 + p {
  margin-top: 2px;
}

.q4 {
  margin-top: 87px;
}

h2 + .given {
  margin-top: 8px;
}

.resolve {
  margin-top: 5px;
}

.q5 {
  margin-top: 149px;
}

.which {
  font-size: 24px;
}

h2 + .which {
  margin-top: 4px;
}

.scraps {
  display: block;
  margin: 66px 0 13px 78px;
}

/* graphs */
.graphs {
  display: flex;
  align-items: flex-start;
  margin: 72px -120px 0 -47px;
}

.graph-col {
  width: 603px;
  height: 806px;
  padding: 2px 0 0 52px;
  border-left: 17px solid #f5f5f5;
}

.graph-col.right {
  width: 515px;
  height: 1078px;
  margin-top: 6px;
  padding: 8px 0 0 43px;
}

.plot {
  display: flex;
  align-items: flex-start;
}

.plot > svg {
  margin: 27px 0 0 10px;
}

.lower {
  margin-top: 29px;
}

.lower > svg {
  margin: 16px 0 0 -1px;
}

.right .plot > svg {
  margin: 21px 0 0 7px;
}

.second-plot {
  margin-top: 37px;
}

.right .second-plot > svg {
  margin-top: 32px;
}

.third-plot {
  margin-top: 20px;
}

.right .third-plot > svg {
  margin: 16px 0 0 6px;
}

.pick {
  position: relative;
  width: 36px;
}

.pick select {
  display: block;
  width: 100%;
  height: 22px;
  padding: 0 4px;
  border: 1px solid #eee;
  border-radius: 3px;
  background: #fff;
  color: #000;
  font: 12px/14px "Liberation Sans", sans-serif;
  appearance: none;
}

.pick svg {
  position: absolute;
  right: 5px;
  top: 8px;
  fill: none;
  stroke: #111;
  stroke-width: 2;
}

.right .pick {
  width: 31px;
}

.right .pick select {
  height: 17px;
}

.right .pick svg {
  top: 6px;
}

.axis-num {
  font: 700 15px "Liberation Sans", sans-serif;
  fill: #2a2ae0;
}

.axis-name {
  font: 22px "Liberation Sans", sans-serif;
  stroke: #000;
  stroke-width: 0.6;
}

.curve {
  fill: none;
  stroke: #0a9080;
  stroke-width: 4;
}

.dot {
  fill: #0a9080;
}

.hole {
  fill: #fff;
  stroke: #0a9080;
  stroke-width: 3.5;
}

hr {
  height: 1px;
  margin: 50px 0 0 -2px;
  border: 0;
  background: #ddd;
}

hr.wide {
  margin: 15px 0 0 -26px;
}

.tiny {
  margin-left: 8px;
  color: #333;
  font: 700 11px/26px "Open Sans", sans-serif;
}

/* status bar */
.status {
  display: flex;
  align-items: center;
  gap: 27px;
  height: 33px;
  padding: 0 11px;
  border-top: 1px solid #c6c6c6;
  background: #f3f3f3;
  color: #444;
  font-size: 15px;
}

.access {
  display: flex;
  align-items: center;
  gap: 4px;
}

.views {
  display: flex;
  height: 100%;
  margin: 0 -19px 0 auto;
}

.views button {
  justify-content: center;
  width: 60px;
}

.views .current {
  background: #c6c6c6;
}

.zoom-box {
  display: flex;
  align-items: center;
  gap: 8px;
  margin-right: -7px;
}

.zoom {
  width: 148px;
  height: 18px;
  margin: 0;
  background: linear-gradient(#333, #333) center / 100% 2px no-repeat;
  appearance: none;
}

.zoom::-webkit-slider-thumb {
  width: 8px;
  height: 17px;
  background: #666;
  appearance: none;
}

/* taskbar */
.taskbar {
  display: flex;
  height: 60px;
  background: #1c1c1c;
  color: #fff;
}

.start {
  justify-content: center;
  width: 71px;
}

.search {
  display: flex;
  align-items: center;
  gap: 14px;
  width: 515px;
  padding-left: 16px;
  border: 2px solid #bcbcbc;
  background: #f3f3f3;
}

.search input {
  flex: 1;
  border: 0;
  outline: 0;
  background: none;
  color: #222;
  font: 21px "Open Sans", sans-serif;
}

.search input::placeholder {
  color: #333;
}

.apps {
  display: flex;
}

.apps button {
  justify-content: center;
  width: 75px;
  border-bottom: 3px solid transparent;
  border-top: 3px solid transparent;
}

.apps .open {
  width: 61px;
  margin: 0 7px;
  border-bottom-color: #76b9ed;
}

.apps .focused {
  width: 69px;
  margin: 0 3px;
  border-top-color: #4a4a4a;
  background: #4a4a4a;
}

.ps {
  fill: #31a8ff;
  font-size: 17px;
  font-weight: 700;
}

.wd {
  fill: #fff;
  font-size: 14px;
  font-weight: 700;
}

.tray {
  display: flex;
  align-items: center;
  gap: 15px;
  margin-left: auto;
  padding-right: 8px;
}

.weather {
  margin-right: 10px;
  font-size: 20px;
}

.two-line {
  display: flex;
  flex-direction: column;
  line-height: 27px;
  text-align: center;
}

.clock {
  margin-left: 6px;
}

.alerts {
  position: relative;
  height: 60px;
  margin-left: 21px;
  padding-right: 29px;
  border-right: 1px solid #666;
}

.badge {
  position: absolute;
  left: 11px;
  top: 29px;
  width: 25px;
  height: 25px;
  border: 1px solid #888;
  border-radius: 50%;
  background: #333;
  font-size: 15px;
  line-height: 22px;
}
```
